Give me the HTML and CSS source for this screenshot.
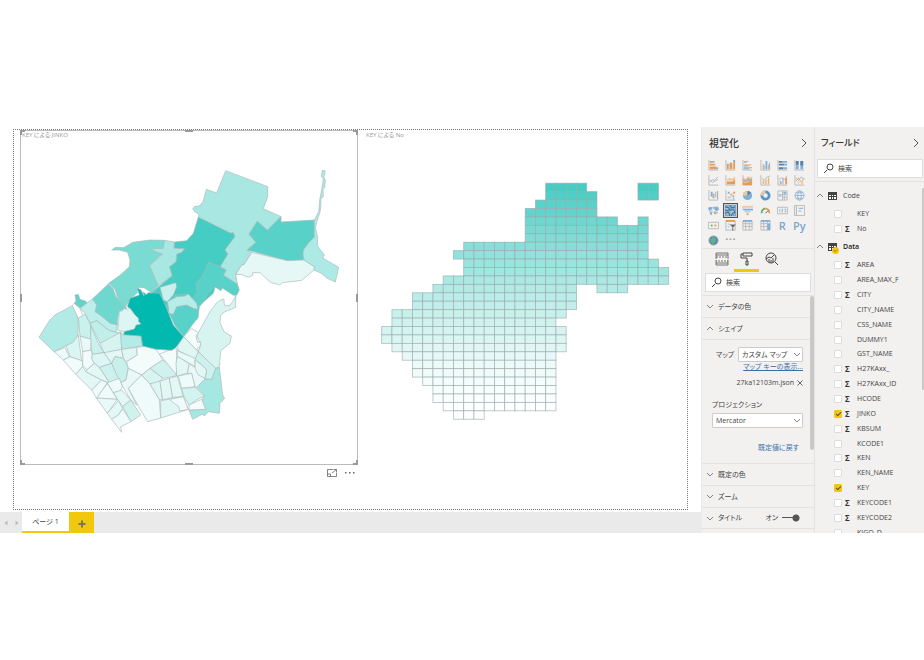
FILE: index.html
```html
<!DOCTYPE html>
<html lang="ja">
<head>
<meta charset="utf-8">
<title>レポート</title>
<link rel="stylesheet" href="styles.css">
</head>
<body>
<div class="app">
  <main class="report">
    <div class="canvas">
      <section class="visual selected">
        <h2 class="visual-title">KEY による JINKO</h2>
        <svg class="map" viewBox="63 426 1008 966" role="img" aria-label="KEY による JINKO">
          <g transform="translate(0 360)">
            <path fill="#45ccc3" d="M595 291L692 339 700 337 705 350 675 390 684 402 661 440 640 520 560 590 500 560 455 518 476 500 516 467 508 440 528 425 530 402 545 397 553 386 522 385 523 366 560 362 580 340Z"/>
            <path fill="#7adbd3" d="M335 390L346 382 370 383 385 375 398 367 450 360 494 361 488 400 449 437 475 497 455 518 432 503 415 502 412 518 390 538 378 558 356 545 346 510 326 490 360 466 388 440 390 420 383 397 358 390Z"/>
            <path fill="#a9e8e2" d="M494 361L523 366 522 385 553 386 545 397 530 402 528 425 508 440 516 467 475 497 449 437 488 403 475 398 462 392 456 386 490 385Z"/>
          </g>
          <g transform="translate(510 840)">
            <path fill="#58d2c9" d="M116-53L151-40 169-30 161-14 202 12 208 30 200 46 190 46 157 24 153 32 134 20 112 42 103 62 88 80 84 115 74 125 41 170 14 135 0 105-15 85 15 45 50 42 68 55 82 38 78 10 96-10Z"/>
          </g>
          <g transform="translate(540 360)">
            <path fill="#a9e8e2" d="M137 152L263 200 263 230 250 266 303 290 262 331 232 304 207 343 228 367 202 390 215 397 192 434 186 434 167 462 172 492 131 466 139 450 121 440 144 402 135 390 165 350 160 337 152 339 55 291 57 283 44 275 38 266 45 259 58 258 69 245 79 208 110 219Z"/>
            <path fill="#58d2c9" d="M303 290L303 306 403 300 403 352 385 370 372 388 369 400 372 420 322 422 202 390 228 367 207 343 232 304 262 331Z"/>
            <path fill="#e5f8f6" d="M215 397L322 422 372 420 404 440 402 450 365 481 307 488 300 495 272 487 248 466 241 458 230 458 218 458 218 466 205 472 182 463 167 464 186 434 192 434Z"/>
            <path fill="#aeeae5" d="M427 151L435 152 434 165 431 172 436 180 434 203 429 208 430 230 423 234 422 265 419 280 411 303 406 322 413 352 412 378 433 405 428 414 476 442 466 486 440 474 424 460 402 450 404 440 372 420 369 400 372 388 385 370 403 352 403 300 416 275 419 240 426 205 430 176 424 170Z"/>
          </g>
          <g transform="translate(90 840)">
            <path fill="#6ed8cf" d="M235 12L250 28 258 50 268 65 288 80 290 88 268 92 262 120 262 135 240 130 210 105 195 95 200 75 187 57Z"/>
            <path fill="#62d3cb" d="M135 45L145 43 150 58 168 64 172 70 150 85 132 70 138 64Z"/>
            <path fill="#b2eae5" d="M27 172L58 122 75 105 127 77 140 95 145 130 143 205 108 197 72 215Z"/>
            <path fill="#fff" d="M132 70L150 85 160 110 145 115 127 77Z"/>
            <path fill="#beeeea" d="M150 85L187 57 200 75 195 95 210 105 240 130 262 135 258 157 235 150 200 122 180 130 165 100Z"/>
            <path fill="#c9f1ed" d="M145 115L165 102 182 135 183 178 150 168Z"/>
            <path fill="#c0efea" d="M180 130L200 122 235 150 258 157 272 157 238 178 210 190Z"/>
            <path fill="#d8f4f1" d="M210 190L238 175 272 157 275 208 222 220Z"/>
            <path fill="#b5ebe6" d="M272 157L281 164 333 168 338 198 275 208Z"/>
            <path fill="#c9f1ed" d="M182 135L205 190 222 218 187 223 182 190Z"/>
            <path fill="#dbf5f2" d="M108 197L128 188 145 165 155 243 120 230Z"/>
            <path fill="#e8f9f7" d="M150 168L183 178 182 210 158 215Z"/>
            <path fill="#edfaf9" d="M72 215L105 203 118 230 100 240Z"/>
            <path fill="#f0fbfa" d="M100 240L120 230 158 243 158 260 137 283Z"/>
            <path fill="#e3f7f5" d="M137 283L158 260 168 275 215 300 185 330Z"/>
            <path fill="#f0fbfa" d="M158 215L183 210 187 223 185 235 193 250 170 270 158 255Z"/>
            <path fill="#def6f3" d="M187 223L222 218 245 250 208 262 193 250 185 235Z"/>
            <path fill="#e3f7f5" d="M168 275L170 270 193 250 208 262 240 310 215 300Z"/>
            <path fill="#cdf2ee" d="M208 262L245 250 268 295 240 310Z"/>
            <path fill="#e3f7f5" d="M222 218L275 208 280 235 255 230 245 250Z"/>
            <path fill="#c8f0ec" d="M245 250L255 230 280 235 295 262 290 285 288 300 272 308 260 285Z"/>
            <path fill="#e0f6f4" d="M275 208L320 202 322 225 290 245 280 235Z"/>
            <path fill="#f3fcfb" d="M320 202L345 199 378 208 388 222 398 240 360 265 335 285 295 265 290 245 322 225Z"/>
            <path fill="#eaf9f7" d="M295 265L335 285 295 325 320 375 302 360 272 308 288 300Z"/>
            <path fill="#eefbfa" d="M295 325L335 285 360 312 388 358 392 414 353 425 332 390Z"/>
            <path fill="#d8f4f1" d="M335 285L360 265 400 295 390 305 360 312Z"/>
            <path fill="#d0f2ef" d="M360 265L398 240 422 255 440 287 400 295Z"/>
            <path fill="#f3fcfb" d="M388 222L437 203 440 205 440 285Z"/>
            <path fill="#e0f6f4" d="M360 312L390 303 398 360 388 358Z"/>
            <path fill="#e3f7f5" d="M390 303L418 295 428 352 398 360Z"/>
            <path fill="#e3f7f5" d="M418 295L442 288 460 350 428 352Z"/>
            <path fill="#e0f6f4" d="M392 362L460 350 475 388 392 414Z"/>
            <path fill="#effbfa" d="M418 358L460 350 475 388 450 393 445 378 430 368Z"/>
            <path fill="#effbfa" d="M185 330L215 300 232 308 200 355Z"/>
            <path fill="#effbfa" d="M200 355L232 310 262 358 215 355Z"/>
            <path fill="#e8f9f7" d="M200 355L215 355 262 358 232 400Z"/>
            <path fill="#effbfa" d="M232 308L268 295 277 320 270 334 250 338Z"/>
            <path fill="#e3f7f5" d="M250 338L275 330 302 360 278 380Z"/>
            <path fill="#d0f2ee" d="M278 380L302 360 332 405 303 425Z"/>
            <path fill="#e3f7f5" d="M232 400L265 362 278 385 265 405 245 418Z"/>
            <path fill="#effbfa" d="M245 418L265 405 278 387 303 425 272 440 275 457Z"/>
            <path fill="#01b9ae" d="M322 24L333 30 342 48 340 35 348 44 355 38 388 40 400 62 410 85 420 110 430 135 462 172 437 203 425 211 378 208 338 198 333 168 281 164 283 153 313 145 318 135 333 131 325 125 325 115 313 103 300 85 292 80 300 55 328 45Z"/>
            <path fill="#def6f3" d="M268 95L278 92 280 85 292 88 300 85 313 103 325 115 325 125 333 131 318 135 313 147 281 155 263 150Z"/>
            <path fill="#c8f0ec" d="M390 22L437 8 440 20 430 45 412 65 400 60Z"/>
            <path fill="#b8ece8" d="M412 65L440 50 465 48 475 42 500 70 503 88 490 85 470 75 440 80 430 103 417 100 415 80Z"/>
          </g>
          <g transform="translate(510 840)">
            <path fill="#d8f4f1" d="M152 60L162 58 163 75 178 78 188 65 197 48 197 82 165 95 152 105 150 128 162 155 184 168 180 190 152 212 148 262 137 265 105 235 85 215 92 195 80 165 78 170 120 95 140 68Z"/>
            <path fill="#a5e7e1" d="M137 265L148 262 158 345 164 355 150 370 148 400 115 395 103 408 98 402 68 418 57 390 107 388 95 362 103 345 80 322 105 297 125 298Z"/>
            <path fill="#cdf2ee" d="M85 215L137 265 125 298 105 297 110 270 95 255 75 235Z"/>
            <path fill="#dff6f3" d="M41 170L85 215 75 238 25 212 22 198Z"/>
            <path fill="#f5fcfc" d="M65 145L85 158 78 170 83 188 92 185 90 200 82 205 85 215 41 170Z"/>
            <path fill="#e8f9f7" d="M22 212L75 235 75 260 32 235 22 230Z"/>
            <path fill="#e3f7f5" d="M22 230L32 235 58 252 52 280 20 288 18 250Z"/>
            <path fill="#e8f9f7" d="M58 252L75 262 105 297 80 322 75 320 65 280 52 280Z"/>
            <path fill="#e3f7f5" d="M75 240L95 255 110 270 105 295 85 285 75 265Z"/>
            <path fill="#effbfa" d="M25 288L65 280 75 320 35 325Z"/>
            <path fill="#d3f3f0" d="M35 325L75 322 103 348 80 360 57 375 40 345Z"/>
            <path fill="#f5fcfc" d="M57 375L95 358 107 388 57 390Z"/>
          </g>
        </svg>
        <i class="handle nw"></i><i class="handle n"></i><i class="handle ne"></i>
        <i class="handle w"></i><i class="handle e"></i>
        <i class="handle sw"></i><i class="handle s"></i><i class="handle se"></i>
      </section>
      <section class="visual">
        <h2 class="visual-title">KEY による No</h2>
        <svg class="cells" id="cells" viewBox="365 142 322 320" role="img" aria-label="KEY による No"></svg>
      </section>
      <div class="visual-actions">
        <button aria-label="フォーカス モード"><svg width="10" height="8" viewBox="0 0 10 8" fill="none" stroke="#666"><path d="M6 .5H.5v7h9V4M6.5.5h3v3M9.500 .5L5 4M.5 5h3v2.500" stroke-width=".8"/></svg></button>
        <button aria-label="その他のオプション"><svg width="10" height="8" viewBox="0 0 10 8" fill="#666"><path d="M0 3h1.500v1.500H0zM4 3h1.500v1.500H4zM8 3h1.500v1.500H8z"/></svg></button>
      </div>
    </div>
    <nav class="pages">
      <button class="arrow" aria-label="前のページ"><svg width="4" height="6" viewBox="0 0 4 6"><path d="M3.500 .5v5L.5 3z" fill="#bbb"/></svg></button>
      <button class="arrow" aria-label="次のページ"><svg width="4" height="6" viewBox="0 0 4 6"><path d="M.5 .5v5L3.500 3z" fill="#bbb"/></svg></button>
      <button class="page">ページ 1</button>
      <button class="add" aria-label="新しいページ"><svg width="8" height="8" viewBox="0 0 8 8"><path d="M4 .5v7M.5 4h7" stroke="#7d7652" stroke-width="2"/></svg></button>
    </nav>
  </main>

  <aside class="pane visuals">
    <header class="pane-head"><h1>視覚化</h1><button aria-label="折りたたむ"><svg width="6" height="10" viewBox="0 0 6 10"><path d="M1 1l4 4-4 4" fill="none" stroke="#555"/></svg></button></header>
    <div class="gallery">
      <button aria-label="積み上げ横棒"><svg viewBox="0 0 12 12"><path class="ax" d="M1 0v11h10"/><path class="o" d="M2 1h3v2H2zM2 4h5v2H2zM2 7h7v3H2z"/><path class="b" d="M5 1h2v2H5zM7 4h1v2H7zM9 8h2v2H9z"/></svg></button>
      <button aria-label="積み上げ縦棒"><svg viewBox="0 0 12 12"><path class="ax" d="M1 0v11h10"/><path class="o" d="M2 5h2v5H2zM5 3h3v7H5zM9 1h2v9H9z"/><path class="b" d="M2 4h2v2H2zM5 6h3v1H5zM9 0h2v2H9z"/></svg></button>
      <button aria-label="集合横棒"><svg viewBox="0 0 12 12"><path class="ax" d="M1 0v11h10"/><path class="o" d="M2 1h5v1H2zM2 5h8v1H2zM2 8h9v1H2z"/><path class="b" d="M2 2h3v1H2zM2 6h5v1H2zM2 9h6v1H2z"/></svg></button>
      <button aria-label="集合縦棒"><svg viewBox="0 0 12 12"><path class="ax" d="M1 0v11h10"/><path class="o" d="M3 4h1v6H3zM9 5h1v5H9z"/><path class="b" d="M4 6h1v4H4zM6 1h2v9H6zM10 3h1v7h-1z"/></svg></button>
      <button aria-label="100% 積み上げ横棒"><svg viewBox="0 0 12 12"><path class="ax" d="M1 0v11h10"/><path class="d" d="M2 1h4v2H2zM2 4h6v2H2zM2 8h5v2H2z"/><path class="b" d="M6 1h5v2H6zM8 4h3v2H8zM7 8h4v2H7z"/></svg></button>
      <button aria-label="100% 積み上げ縦棒"><svg viewBox="0 0 12 12"><path class="ax" d="M1 0v11h10"/><path class="b" d="M2 1h3v9H2zM7 1h3v9H7z"/><path class="d" d="M2 1h3v4H2zM7 1h3v5H7z"/></svg></button>

      <button aria-label="折れ線"><svg viewBox="0 0 12 12"><path class="ax" d="M1 0v11h10"/><path class="lb" d="M2 8l3-3 2 1 4-4"/><path class="ax" d="M2 5l3 3 2-1 4-2"/></svg></button>
      <button aria-label="面"><svg viewBox="0 0 12 12"><path class="ax" d="M1 0v11h10"/><path class="p" d="M2 5l3-2 3 1 3-3v5H2z"/><path class="o" d="M2 7l3 0 3 0 3-2v5H2z"/></svg></button>
      <button aria-label="積み上げ面"><svg viewBox="0 0 12 12"><path class="ax" d="M1 0v11h10"/><path class="p" d="M1 2l3 2 3-3 2 2 2-2v9H1z"/><path class="g" d="M1 4l3 2 3-3 2 2 2-2v3L9 8 7 6 4 8 1 6z"/><path class="o" d="M1 7l3 2 3-2 2 1 2-2v5H1z"/></svg></button>
      <button aria-label="折れ線および積み上げ縦棒"><svg viewBox="0 0 12 12"><path class="ax" d="M1 0v11h10M2 4l3 1 3-3 3-1"/><path class="o" d="M3 6h1v4H3zM6 5h1v5H6zM9 3h1v7H9z"/><path class="p" d="M4 5h1v5H4zM7 4h1v6H7z"/></svg></button>
      <button aria-label="折れ線および集合縦棒"><svg viewBox="0 0 12 12"><path class="ax" d="M1 0v11h10M2 5l3-2 3 2 3-4"/><path class="b" d="M3 6h1v4H3zM6 3h1v7H6z"/><path class="o" d="M4 7h1v3H4zM9 3h2v7H9z"/></svg></button>
      <button aria-label="リボン"><svg viewBox="0 0 12 12"><path class="ax" d="M1 0v11h10"/><path class="lb" d="M2 3l3 3 3-4 3 3"/><path class="lo" d="M2 7l3-4 3 5 3-5"/><path class="p" d="M4 7h2v2H4zM8 7h2v3H8z"/></svg></button>

      <button aria-label="ウォーターフォール"><svg viewBox="0 0 12 12"><path class="ax" d="M1 0v11h10"/><path class="b" d="M3 2h2v5H3zM10 1h1v9h-1z"/><path class="g" d="M5 4h2v5H5z"/><path class="o" d="M8 2h1v6H8z"/></svg></button>
      <button aria-label="散布図"><svg viewBox="0 0 12 12"><path class="ax" d="M1 0v11h10"/><path class="b" d="M3 2h2v2H3zM8 6h2v2H8zM5 7h1v2H5z"/><path class="o" d="M6 4h2v2H6zM9 2h2v2H9zM3 7h1v2H3z"/><path class="d" d="M9 9h1v1H9z"/></svg></button>
      <button aria-label="円"><svg viewBox="0 0 12 12"><circle class="b" cx="6" cy="6" r="5"/><path class="p" d="M6 6V1a5 5 0 0 0-5 5z"/><path class="d" d="M6 1a5 5 0 0 1 4 2L6 6z"/></svg></button>
      <button aria-label="ドーナツ"><svg viewBox="0 0 12 12"><circle cx="6" cy="6" r="4" fill="none" stroke="#3d85c0" stroke-width="3"/><path d="M2 6a4 4 0 0 1 4-4" fill="none" stroke="#f3c28d" stroke-width="3"/></svg></button>
      <button aria-label="ツリーマップ"><svg viewBox="0 0 12 12"><path class="ax" d="M1 1h10v10H1zM6 1v10M1 5h10M8 5v6M6 8h5"/><path class="b" d="M7 2h3v2H7zM2 6h3v1H2z"/></svg></button>
      <button aria-label="マップ"><svg viewBox="0 0 12 12"><circle class="lb" cx="6" cy="6" r="5"/><ellipse class="lb" cx="6" cy="6" rx="2" ry="5"/><path class="lb" d="M1 6h10M2 3h8M2 9h8"/></svg></button>

      <button aria-label="塗り分け地図"><svg viewBox="0 0 12 12"><path class="b" d="M0 3l3-1 2 1-1 2-3 1zM7 2l4 0 1 3-3 2-2-2zM2 8l3 0-1 3-2-1z"/><path class="g" d="M5 2h2v2H5zM1 6h4v1H1zM6 7h3v3H7z"/><path class="o" d="M8 8h3v1H8z"/></svg></button>
      <button class="chosen" aria-label="図形マップ"><svg viewBox="0 0 12 12"><path class="b" d="M0 0h12v12H0z"/><path d="M0 2l4 1 1 2-3 1-2-1M6 0l1 3 4-1M5 6l4-1 2 3-3 1-1 3M0 9l4-1 1 4" fill="#9cc8e8" stroke="#284b68"/></svg></button>
      <button aria-label="じょうご"><svg viewBox="0 0 12 12"><path class="b" d="M0 4h12v2H2zM3 7h6v1H3z"/><path class="p" d="M0 1h12v2H0z"/><path class="o" d="M5 9h2v2H5z"/></svg></button>
      <button aria-label="ゲージ"><svg viewBox="0 0 12 12"><path d="M2 9a4 4 0 0 1 4-5" fill="none" stroke="#5ba25b" stroke-width="2"/><path d="M6 4a4 4 0 0 1 4 5" fill="none" stroke="#e98b36" stroke-width="2"/><path d="M6 9l3-3" stroke="#444"/></svg></button>
      <button aria-label="カード"><svg viewBox="0 0 12 12"><path class="ax" d="M.5 2.500h11v7H.5z"/><path class="lb" d="M3 4.500v3M5 4.500h1.500L5 7.500h1.500M8 4.500h1.500v3H8"/></svg></button>
      <button aria-label="複数の行カード"><svg viewBox="0 0 12 12"><path class="ax" d="M.5 .5h11v11H.5z"/><path class="g" d="M2 1h1v10H2z"/><path class="b" d="M5 3h5v1H5zM5 6h3v1H5z"/></svg></button>

      <button aria-label="KPI"><svg viewBox="0 0 12 12"><path class="ax" d="M.5 2.500h11v7H.5z"/><path class="e" d="M3 5h2v2H3z"/><path class="o" d="M7 5h2v2H7z"/></svg></button>
      <button aria-label="スライサー"><svg viewBox="0 0 12 12"><path class="ax" d="M1 1h10v10H1z"/><path class="o" d="M1 0h10v2H1z"/><path class="b" d="M3 4h2v1H3zM3 7h2v1H3z"/><path d="M5 5h7L9 8v3l-1 1V8z" fill="#555"/></svg></button>
      <button aria-label="テーブル"><svg viewBox="0 0 12 12"><path class="ax" d="M1 1h10v10H1zM1 4h10M1 7h10M4 1v10M8 1v10"/><path class="b" d="M1 0h10v2H1z"/></svg></button>
      <button aria-label="マトリックス"><svg viewBox="0 0 12 12"><path class="ax" d="M1 1h10v10H1zM1 4h10M1 7h10M4 1v10M8 1v10"/><path class="b" d="M1 0h10v2H1zM8 4h3v7H8z"/></svg></button>
      <button aria-label="R スクリプト" class="letter">R</button>
      <button aria-label="Python" class="letter">Py</button>
      <button aria-label="ArcGIS"><svg viewBox="0 0 12 12"><circle cx="6" cy="6" r="5" fill="#2d7fae" stroke="#8a9aa5"/><path class="e" d="M3 4l3-2 3 2-1 4-3 2-2-3z"/></svg></button>
      <button aria-label="その他"><svg viewBox="0 0 12 12" fill="#444"><path d="M1 4h2v1H1zM5 4h2v1H5zM9 4h2v1H9z"/></svg></button>
    </div>
    <div class="modes">
      <button aria-label="フィールド"><svg width="14" height="14" viewBox="0 0 14 14" fill="none" stroke="#555"><path d="M1 5V1h12v4M1 9v4h12V9M1 3h12M1 11h12" stroke-width=".8"/><path d="M1 5h12v4H1z" stroke-dasharray="2 1" stroke-width=".8"/></svg></button>
      <button class="on" aria-label="書式"><svg width="14" height="14" viewBox="0 0 14 14" fill="none" stroke="#444"><path d="M3 1h9v3H3zM3 2H1v4h6v3M6 9h2v4H6z"/></svg></button>
      <button aria-label="分析"><svg width="14" height="14" viewBox="0 0 14 14" fill="none" stroke="#444"><circle cx="6" cy="6" r="5"/><path d="M10 10l3 3M1 7l3-2 2 1 3-3M4 7v3M6 8v3M8 6v4"/></svg></button>
    </div>
    <label class="search"><svg width="11" height="11" viewBox="0 0 11 11"><path d="M4 7L1 10M7 1a3 3 0 1 1 0 6 3 3 0 0 1 0-6" fill="none" stroke="#444"/></svg><input type="text" placeholder="検索" aria-label="書式の検索"></label>
    <div class="options">
      <button class="row"><svg class="chev" viewBox="0 0 8 5"><path d="M1 1l3 3 3-3"/></svg>データの色</button>
      <button class="row"><svg class="chev" viewBox="0 0 8 5"><path d="M1 4l3-3 3 3"/></svg>シェイプ</button>
      <div class="form">
        <div class="line"><label for="map">マップ</label><span class="drop"><select id="map"><option>カスタム マップ</option></select><svg class="chev" viewBox="0 0 8 5"><path d="M1 1l3 3 3-3"/></svg></span></div>
        <a class="keys" href="#">マップ キーの表示...</a>
        <div class="file">27ka12103m.json <button aria-label="削除"><svg width="6" height="6" viewBox="0 0 6 6"><path d="M.5 .5l5 5M5.500 .5l-5 5" stroke="#444" stroke-width=".8"/></svg></button></div>
        <label class="above" for="proj">プロジェクション</label>
        <span class="drop"><select id="proj"><option>Mercator</option></select><svg class="chev" viewBox="0 0 8 5"><path d="M1 1l3 3 3-3"/></svg></span>
        <a class="reset" href="#">既定値に戻す</a>
      </div>
      <button class="row"><svg class="chev" viewBox="0 0 8 5"><path d="M1 1l3 3 3-3"/></svg>既定の色</button>
      <button class="row"><svg class="chev" viewBox="0 0 8 5"><path d="M1 1l3 3 3-3"/></svg>ズーム</button>
      <div class="row last"><svg class="chev" viewBox="0 0 8 5"><path d="M1 1l3 3 3-3"/></svg><label for="title">タイトル</label><span class="state">オン</span><input class="switch" id="title" type="checkbox" checked></div>
      <i class="bar"></i>
    </div>
  </aside>

  <aside class="pane fields">
    <header class="pane-head"><h1 class="plain">フィールド</h1><button aria-label="折りたたむ"><svg width="6" height="10" viewBox="0 0 6 10"><path d="M1 1l4 4-4 4" fill="none" stroke="#555"/></svg></button></header>
    <label class="search"><svg width="11" height="11" viewBox="0 0 11 11"><path d="M4 7L1 10M7 1a3 3 0 1 1 0 6 3 3 0 0 1 0-6" fill="none" stroke="#444"/></svg><input type="text" placeholder="検索" aria-label="フィールドの検索"></label>
    <div class="tables">
      <button class="table-name"><svg class="chev" viewBox="0 0 8 5"><path d="M1 4l3-3 3 3"/></svg><svg class="grid-icon" viewBox="0 0 9 8"><path d="M0 0h9v8H0z" fill="#444"/><path d="M1 3h2v1H1zM4 3h1v1H4zM6 3h2v1H6zM1 5h2v2H1zM4 5h1v2H4zM6 5h2v2H6z" fill="#fff"/></svg>Code</button>
      <ul class="columns" id="code"></ul>
      <button class="table-name used"><svg class="chev" viewBox="0 0 8 5"><path d="M1 4l3-3 3 3"/></svg><span class="badged"><svg class="grid-icon" viewBox="0 0 9 8"><path d="M0 0h9v8H0z" fill="#444"/><path d="M1 3h2v1H1zM4 3h1v1H4zM6 3h2v1H6zM1 5h2v2H1zM4 5h1v2H4zM6 5h2v2H6z" fill="#fff"/></svg><svg class="badge" viewBox="0 0 7 7"><circle cx="3.500" cy="3.500" r="3.500" fill="#f2c80f"/><path d="M2 3.500l1 1 2-2" fill="none" stroke="#555" stroke-width=".8"/></svg></span>Data</button>
      <ul class="columns data" id="data"></ul>
      <i class="bar"></i>
    </div>
  </aside>
</div>
<script src="script.js"></script>
</body>
</html>
```
FILE: styles.css
```css
* { box-sizing: border-box; }
body {
  margin: 0;
  padding: 127px 0;
  background: #fff;
  color: #444;
  font: 7px/10px "Open Sans", "Noto Sans CJK JP", sans-serif;
  font-feature-settings: "palt";
}
button, input, select { font: inherit; color: inherit; font-feature-settings: inherit; }
button { display: flex; align-items: center; border: 0; padding: 0; background: none; }
svg { display: block; }
h1, h2, ul { margin: 0; padding: 0; }

.app { display: flex; height: calc(100vh - 254px); overflow: hidden; }
.report { flex: 1; display: flex; flex-direction: column; min-width: 0; }
.canvas {
  flex: 1;
  display: grid;
  grid-template-columns: 338fr 329fr;
  grid-template-rows: auto 1fr;
  margin: 2px 13px;
  padding-left: 6px;
  border: 1px dotted #777;
}
.visual { position: relative; padding: 1px 0 0 7px; }
.selected { padding: 0; border: 1px solid #bbb; }
.visual-title { color: #999; font-size: 6px; font-weight: 400; line-height: 9px; padding: 0 1px 2px; }
.map, .cells { width: 100%; }
.map path { stroke: #a9bab9; stroke-width: 2; stroke-linejoin: round; }
.cells rect { stroke: #98aaaa; stroke-opacity: 0.75; stroke-width: 0.8; }
.handle { position: absolute; border: 0 solid #999; width: 5px; height: 5px; }
.nw { left: -1px; top: -1px; border-width: 2px 0 0 2px; }
.ne { right: -1px; top: -1px; border-width: 2px 2px 0 0; }
.sw { left: -1px; bottom: -1px; border-width: 0 0 2px 2px; }
.se { right: -1px; bottom: -1px; border-width: 0 2px 2px 0; }
.n, .s { left: calc(50% - 4px); width: 8px; border-top-width: 2px; height: 2px; }
.n { top: -1px; }
.s { bottom: -1px; }
.w, .e { top: calc(50% - 4px); height: 8px; width: 2px; border-left-width: 2px; }
.w { left: -1px; }
.e { right: -1px; }
.visual-actions { display: flex; justify-content: flex-end; align-items: flex-start; gap: 8px; padding: 4px 3px; }

.pages { display: flex; height: 21px; background: #eaeaea; }
.arrow { width: 11px; justify-content: center; }
.page { width: 47px; justify-content: center; background: #fff; border-bottom: 2px solid #f2c80f; }
.add { width: 25px; justify-content: center; padding-top: 3px; background: #f2c80f; }

.pane { display: flex; flex-direction: column; background: #f2f1f0; overflow: hidden; }
.visuals { width: 113px; border-left: 1px solid #eaeaea; }
.fields { width: 110px; border-left: 1px solid #e2e2e2; }
.pane-head { display: flex; flex: none; justify-content: space-between; align-items: center; height: 31px; padding: 0 7px; }
.fields .pane-head { padding: 0 5px 0 6px; }
.pane-head h1 { font-size: 10px; line-height: 14px; font-weight: 500; color: #333; }
.pane-head .plain { font-size: 9px; }
.gallery {
  display: grid;
  flex: none;
  grid-template-columns: repeat(6, 1fr);
  grid-auto-rows: 1fr;
  place-items: center;
  height: 90px;
  padding: 0 6px 0 3px;
}
.gallery svg { width: 11px; height: 11px; opacity: 0.85; }
.gallery .chosen { padding: 1px; border: 1px solid #555; background: #ccc; }
.gallery .letter { font-size: 11px; font-weight: 600; color: #7ba6cb; }
.ax { fill: none; stroke: #b0b0b0; }
.o { fill: #e98b36; }
.p { fill: #f3c28d; }
.b { fill: #6aa5d6; }
.d { fill: #3c6e9c; }
.g { fill: #9aa5ac; }
.e { fill: #55a36c; }
.lb { fill: none; stroke: #6a9fc9; stroke-width: 0.8; }
.lo { fill: none; stroke: #e98b36; stroke-width: 0.8; }

.modes { display: flex; flex: none; height: 24px; padding-left: 7px; border-top: 1px solid #e2e2e2; }
.modes button { width: 25px; justify-content: center; border-bottom: 3px solid transparent; }
.modes .on { border-color: #f2c80f; }
.search {
  display: flex;
  flex: none;
  align-items: center;
  gap: 4px;
  height: 19px;
  margin: 1px 3px 3px;
  padding-left: 5px;
  border: 1px solid #ddd;
  background: #fff;
}
.fields .search { margin: 1px 1px 3px 2px; }
.search input { width: 70px; padding: 0; border: 0; outline: 0; background: none; }
.search input::placeholder { color: #444; opacity: 1; }
.options { position: relative; }
.row {
  display: flex;
  align-items: center;
  gap: 4px;
  width: 100%;
  height: 22px;
  padding: 0 4px;
  border-top: 1px solid #e2e2e2;
}
.last { border-bottom: 1px solid #e2e2e2; }
.chev { flex: none; width: 8px; height: 5px; }
.chev path { fill: none; stroke: #666; stroke-width: 0.8; }
.form { display: flex; flex-direction: column; padding: 7px 11px 10px 10px; border-top: 1px solid #e2e2e2; height: 124px; }
.line { display: flex; justify-content: space-between; align-items: center; padding-left: 4px; }
.drop { display: block; position: relative; }
.line .drop { width: 65px; }
.drop select {
  display: block;
  width: 100%;
  height: 15px;
  padding: 0 12px 0 3px;
  border: 1px solid #ccc;
  border-radius: 1px;
  appearance: none;
  background: #fff;
}
.drop .chev { position: absolute; right: 2px; top: 5px; pointer-events: none; }
.form a { align-self: flex-end; color: #3a6fa5; }
.form .keys { text-decoration: underline; }
.form .reset { margin: 15px 4px 0; text-decoration: none; }
.file { display: flex; justify-content: flex-end; align-items: center; gap: 3px; margin-top: 6px; }
.above { margin: 12px 0 3px; }
.state { margin-left: auto; }
.switch {
  flex: none;
  appearance: none;
  width: 18px;
  height: 8px;
  margin: 0 10px 0 0;
  background: radial-gradient(circle at 14px 4px, #555 3px, transparent 4px), linear-gradient(#555, #555) 0 3px / 14px 1px no-repeat;
}
.bar { position: absolute; right: 0; top: 1px; width: 4px; height: 154px; border-radius: 2px; background: #c8c8c8; }

.tables { position: relative; flex: none; padding-top: 6px; border-top: 1px solid #e2e2e2; }
.tables .bar { width: 2px; top: 6px; height: 202px; }
.table-name { gap: 4px; height: 15px; padding-left: 1px; }
.used { margin-top: 3px; font-weight: 600; color: #222; }
.grid-icon { width: 9px; height: 8px; margin-right: 2px; }
.badged { position: relative; }
.badge { position: absolute; left: 4px; top: 4px; width: 7px; height: 7px; }
.columns { display: grid; grid-auto-rows: 1fr; height: 30px; margin-top: 3px; list-style: none; }
.columns.data { height: 282px; margin-top: 4px; }
.columns label { display: grid; grid-template-columns: 8px 9px auto; column-gap: 3px; align-items: center; padding-left: 19px; height: 100%; }
.columns b { font-size: 8px; color: #333; }
.columns input { appearance: none; width: 8px; height: 8px; margin: 0; border: 1px solid #ddd; border-radius: 1px; background: #fff; }
.columns input:checked { border-color: #f2c80f; background: #f2c80f; }
.columns input:checked::after { content: ""; display: block; width: 4px; height: 2px; margin: 1px; border: solid #555; border-width: 0 0 1px 1px; transform: rotate(-45deg); }
```
FILE: script.js
```js
// Each row lists [first column, end column) spans of the mesh.
const rows = [
  [[16, 20], [25, 27]], [[16, 21], [25, 27]], [[15, 21]], [[14, 21]],
  [[14, 23], [25, 26]], [[14, 26]], [[14, 26]], [[8, 26]], [[7, 26]],
  [[8, 27]], [[8, 28]], [[6, 28]], [[5, 19], [21, 24]], [[3, 19]],
  [[3, 19]], [[1, 18]], [[1, 17]], [[0, 18]], [[0, 18]], [[1, 18]],
  [[2, 17]], [[3, 17]], [[3, 17]], [[4, 17]], [[5, 17]], [[5, 17]],
  [[6, 17]], [[7, 10]]
];
const low = [255, 255, 255];
const high = [69, 204, 195];
const cellWidth = 10.25;
const cellHeight = 8.43;
const cells = document.getElementById("cells");
rows.forEach((spans, r) => {
  const t = Math.pow(1 - r / 27, 1.5);
  const fill = `rgb(${low.map((v, i) => Math.round(v + (high[i] - v) * t))})`;
  for (const [from, to] of spans) {
    for (let c = from; c < to; c++) {
      const rect = document.createElementNS("http://www.w3.org/2000/svg", "rect");
      rect.setAttribute("x", 381.7 + c * cellWidth);
      rect.setAttribute("y", 183.2 + r * cellHeight);
      rect.setAttribute("width", cellWidth);
      rect.setAttribute("height", cellHeight);
      rect.setAttribute("fill", fill);
      cells.append(rect);
    }
  }
});

// "+" marks a numeric column, "*" a column in use.
const tables = {
  code: ["KEY", "+No"],
  data: ["+AREA", "AREA_MAX_F", "+CITY", "CITY_NAME", "CSS_NAME", "DUMMY1",
    "GST_NAME", "+H27KAxx_", "+H27KAxx_ID", "+HCODE", "*+JINKO", "+KBSUM",
    "KCODE1", "+KEN", "KEN_NAME", "*KEY", "+KEYCODE1", "+KEYCODE2", "KIGO_D"]
};
for (const [id, names] of Object.entries(tables)) {
  document.getElementById(id).innerHTML = names.map(name => {
    const checked = name.includes("*") ? " checked" : "";
    const sigma = name.includes("+") ? "Σ" : "";
    return `<li><label><input type="checkbox"${checked}><b>${sigma}</b><span>${name.replace(/[*+]/g, "")}</span></label></li>`;
  }).join("");
}
```
